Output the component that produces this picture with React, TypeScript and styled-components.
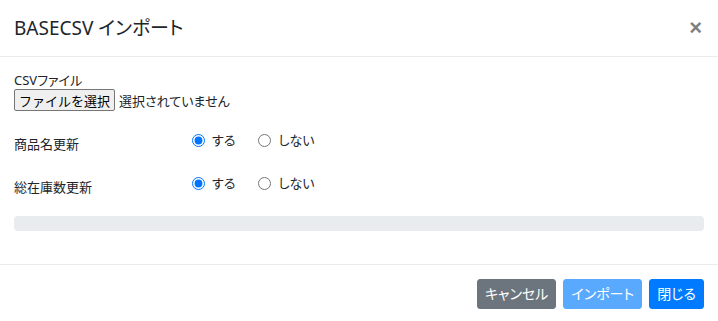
import React from "react";
import styled, { createGlobalStyle } from "styled-components";

const GlobalStyle = createGlobalStyle`
  *, *::before, *::after {
    box-sizing: border-box;
  }
  html, body {
    margin: 0;
    padding: 0;
    background: #ffffff;
  }
  body {
    font-family: "Noto Sans", "Noto Sans CJK JP", sans-serif;
    font-feature-settings: "palt";
    color: #212529;
  }
`;

const Modal = styled.div`
  width: 718px;
  height: 321px;
  display: flex;
  flex-direction: column;
  background: #ffffff;
`;

const Header = styled.div`
  height: 57px;
  padding: 0 14px;
  display: flex;
  align-items: center;
  justify-content: space-between;
  border-bottom: 1px solid #e9ecef;
  flex-shrink: 0;
`;

const Title = styled.h5`
  margin: 0;
  font-size: 19px;
  font-weight: 400;
  line-height: 1.4;
  color: #212529;
`;

const Close = styled.button`
  border: 0;
  background: transparent;
  padding: 0;
  margin-right: 2px;
  font-family: "Liberation Sans", sans-serif;
  font-size: 22px;
  font-weight: 700;
  line-height: 1;
  color: #000;
  opacity: 0.5;
  cursor: pointer;
`;

const Body = styled.div`
  flex: 1;
  padding: 14px 14px 0;
  display: flex;
  flex-direction: column;
`;

const FieldLabel = styled.div`
  font-size: 13px;
  line-height: 18px;
`;

const FilePicker = styled.div`
  display: flex;
  align-items: center;
  gap: 4px;
  height: 22px;
  font-size: 13px;
`;

const FileButton = styled.button`
  height: 22px;
  padding: 0 4px;
  font-family: inherit;
  font-feature-settings: normal;
  font-size: 13px;
  color: #000;
  background: #efefef;
  border: 1px solid #767676;
  border-radius: 2px;
`;

const OptionRow = styled.div<{ $top: number }>`
  display: grid;
  grid-template-columns: 178px 1fr;
  margin-top: ${(p) => p.$top}px;
  font-size: 13px;
`;

const RowLabel = styled.div`
  line-height: 20px;
  padding-top: 4px;
`;

const Options = styled.div`
  display: flex;
  align-items: center;
  gap: 23px;
  height: 20px;
`;

const Option = styled.label`
  display: flex;
  align-items: center;
  gap: 7px;
  line-height: 20px;
`;

const Radio = styled.input`
  width: 13px;
  height: 13px;
  margin: 0;
  accent-color: #0075ff;
`;

const Progress = styled.div`
  margin-top: 19px;
  height: 15px;
  border-radius: 4px;
  background: #e9ecef;
`;

const Footer = styled.div`
  height: 57px;
  border-top: 1px solid #e9ecef;
  display: flex;
  justify-content: flex-end;
  align-items: flex-start;
  gap: 7px;
  padding: 14px 14px 0 0;
  flex-shrink: 0;
`;

const Button = styled.button<{ $tone: "secondary" | "primary" | "disabled" }>`
  height: 30px;
  padding: 0 7px;
  font-family: inherit;
  font-feature-settings: "palt";
  font-size: 14px;
  line-height: 28px;
  color: #ffffff;
  border-radius: 3px;
  border: 1px solid
    ${(p) => (p.$tone === "secondary" ? "#6c757d" : p.$tone === "disabled" ? "#59a9ff" : "#007bff")};
  background: ${(p) =>
    p.$tone === "secondary" ? "#6c757d" : p.$tone === "disabled" ? "#59a9ff" : "#007bff"};
`;

function RadioRow({ label, name, top }: { label: string; name: string; top: number }) {
  return (
    <OptionRow $top={top}>
      <RowLabel>{label}</RowLabel>
      <Options>
        <Option>
          <Radio type="radio" name={name} defaultChecked />
          する
        </Option>
        <Option>
          <Radio type="radio" name={name} />
          しない
        </Option>
      </Options>
    </OptionRow>
  );
}

export default function App() {
  return (
    <>
      <GlobalStyle />
      <Modal>
        <Header>
          <Title>BASECSV インポート</Title>
          <Close aria-label="Close">×</Close>
        </Header>
        <Body>
          <FieldLabel>CSVファイル</FieldLabel>
          <FilePicker>
            <FileButton>ファイルを選択</FileButton>
            <span>選択されていません</span>
          </FilePicker>
          <RadioRow label="商品名更新" name="name" top={19} />
          <RadioRow label="総在庫数更新" name="stock" top={19} />
          <Progress />
        </Body>
        <Footer>
          <Button $tone="secondary">キャンセル</Button>
          <Button $tone="disabled" disabled>
            インポート
          </Button>
          <Button $tone="primary">閉じる</Button>
        </Footer>
      </Modal>
    </>
  );
}
